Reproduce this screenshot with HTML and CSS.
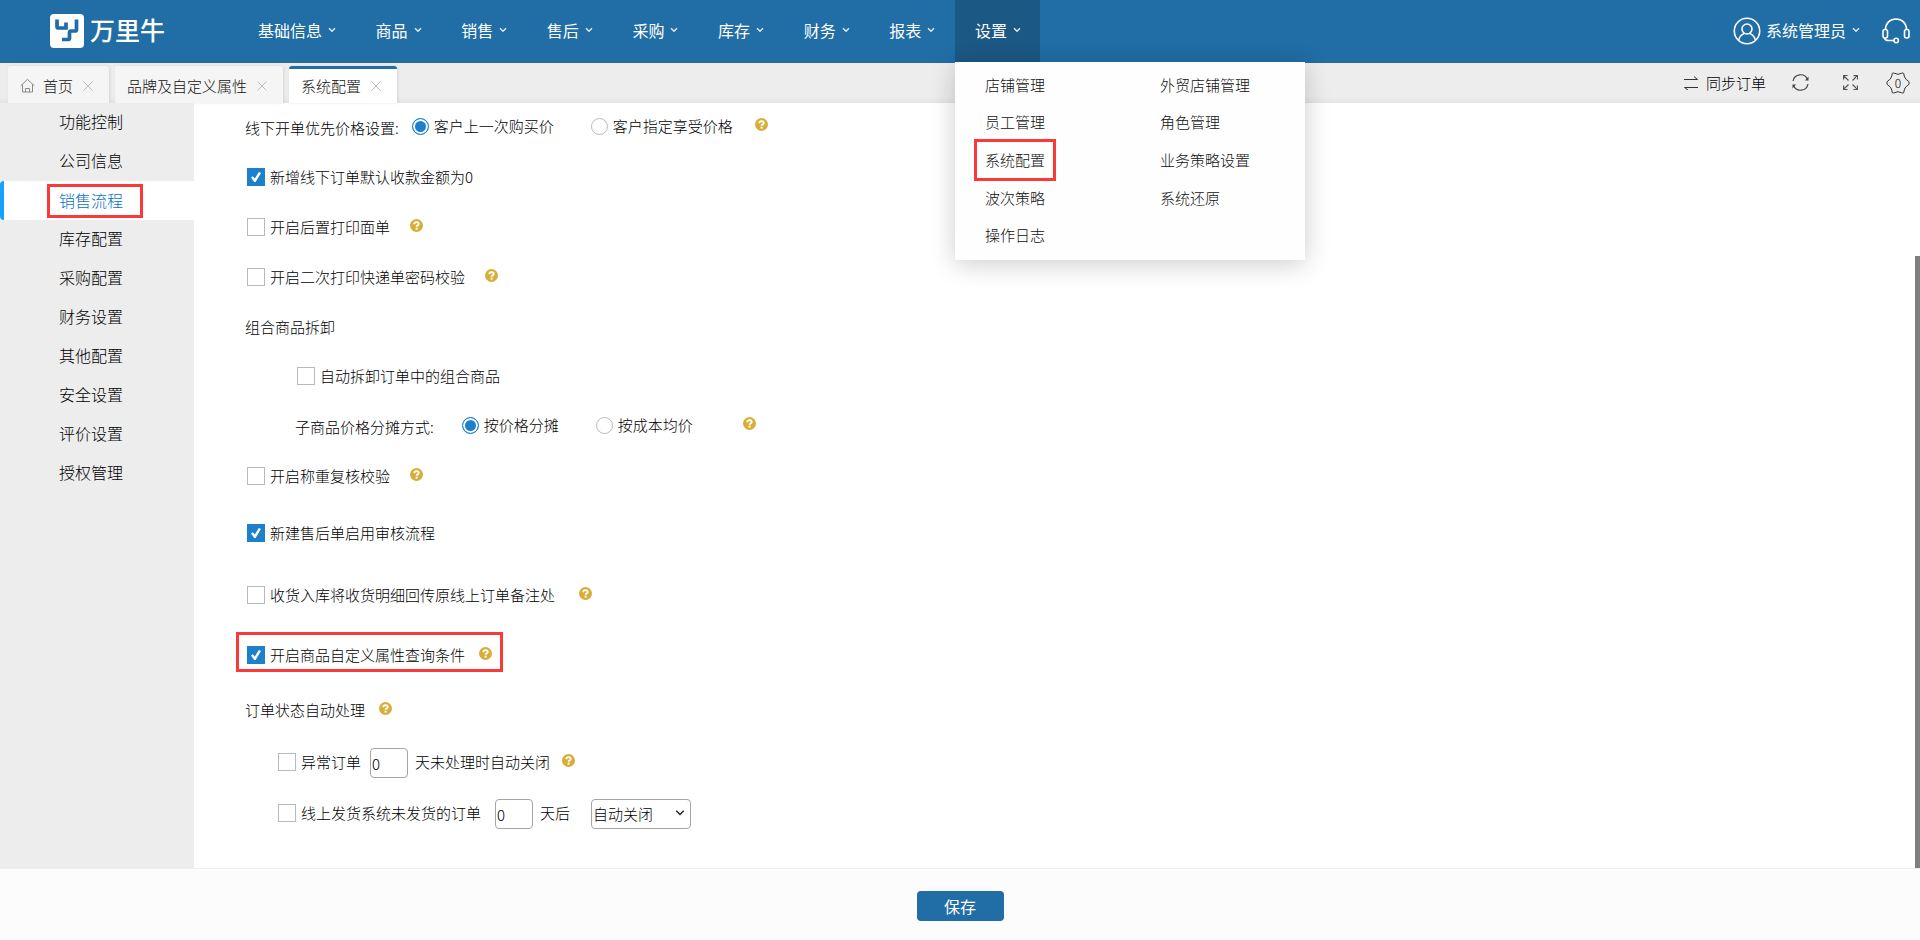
FILE: index.html
```html
<!DOCTYPE html>
<html lang="zh-CN">
<head>
<meta charset="utf-8">
<title>万里牛 - 系统配置</title>
<link rel="stylesheet" href="styles.css">
</head>
<body>
<svg class="defs" aria-hidden="true">
  <symbol id="chev" viewBox="0 0 8 6"><path d="M1 1.200 4 4.200 7 1.200" fill="none" stroke="currentColor" stroke-width="1.500"/></symbol>
  <symbol id="close" viewBox="0 0 10 10"><path d="M.5.5l9 9M9.500.5l-9 9" fill="none" stroke="currentColor"/></symbol>
  <symbol id="help" viewBox="0 0 13 13"><circle cx="6.500" cy="6.500" r="6.500" fill="#d8ae38"/><path d="M4.300 5.300c0-2.900 4.400-2.800 4.400-.3 0 1.400-2.100 1.300-2.100 2.800" fill="none" stroke="#fff" stroke-width="1.900"/><path d="M5.600 8.700h2v1.900h-2z" fill="#fff"/></symbol>
</svg>

<header class="header">
  <a class="brand" href="#">
    <svg class="brand-mark" viewBox="0 0 34 34" aria-hidden="true"><rect width="34" height="34" rx="4" fill="#fff"/><path d="M7 5.500v7q0 1.500 1.500 1.500H16V8.500M26.500 5.500v10q0 1.500-1.500 1.500h-4q-1.500 0-1.500 1.500v5.500q0 1.500-1.500 1.500H12" fill="none" stroke="#216da5" stroke-width="3.700"/></svg>
    <span>万里牛</span>
  </a>
  <nav class="nav">
    <a href="#">基础信息<svg class="chev"><use href="#chev"/></svg></a>
    <a href="#">商品<svg class="chev"><use href="#chev"/></svg></a>
    <a href="#">销售<svg class="chev"><use href="#chev"/></svg></a>
    <a href="#">售后<svg class="chev"><use href="#chev"/></svg></a>
    <a href="#">采购<svg class="chev"><use href="#chev"/></svg></a>
    <a href="#">库存<svg class="chev"><use href="#chev"/></svg></a>
    <a href="#">财务<svg class="chev"><use href="#chev"/></svg></a>
    <a href="#">报表<svg class="chev"><use href="#chev"/></svg></a>
    <div class="nav-open">
      <a class="active" href="#">设置<svg class="chev"><use href="#chev"/></svg></a>
      <div class="menu">
        <a href="#">店铺管理</a><a href="#">外贸店铺管理</a>
        <a href="#">员工管理</a><a href="#">角色管理</a>
        <a class="marked" href="#">系统配置</a><a href="#">业务策略设置</a>
        <a href="#">波次策略</a><a href="#">系统还原</a>
        <a href="#">操作日志</a>
      </div>
    </div>
  </nav>
  <div class="user">
    <svg class="avatar" viewBox="0 0 28 28" fill="none" stroke="#fff" stroke-width="1.600" aria-hidden="true"><circle cx="14" cy="14" r="12.700"/><circle cx="14" cy="12" r="5"/><path d="M5.500 23.200q1.500-5 5.500-6.700M22.500 23.200q-1.500-5-5.500-6.700"/></svg>
    <button class="user-name" type="button">系统管理员<svg class="chev"><use href="#chev"/></svg></button>
    <button class="icon-btn" type="button" aria-label="客服"><svg class="headset" viewBox="0 0 28 26" fill="none" stroke="#fff" stroke-width="1.600"><path d="M3.500 11.500C3.500 5 8 1 14 1s10.500 4 10.500 10.500"/><rect x="1" y="11.500" width="4.500" height="8.500" rx="2"/><rect x="22.500" y="11.500" width="4.500" height="8.500" rx="2"/><path d="M2.500 20q.5 2.500 4 2.500h5.500"/><circle cx="14.200" cy="22.500" r="2.200"/></svg></button>
  </div>
</header>

<div class="tabbar">
  <div class="tabs">
    <a class="tab" href="#"><svg class="home" viewBox="0 0 15 15" fill="none" stroke="#888"><path d="M.7 7.800 7.500 1.300l6.800 6.500M2.500 6.500v7.500h10V6.500M5.500 14v-3.500h4V14"/></svg>首页<svg class="close"><use href="#close"/></svg></a>
    <a class="tab" href="#">品牌及自定义属性<svg class="close"><use href="#close"/></svg></a>
    <a class="tab current" href="#">系统配置<svg class="close"><use href="#close"/></svg></a>
  </div>
  <div class="tools">
    <button class="sync" type="button"><svg viewBox="0 0 14 14" class="i14" fill="none" stroke="#333"><path d="M0 3.500h13.500L10 .5M14 11.500H.5L4 14"/></svg>同步订单</button>
    <button class="icon-btn" type="button" aria-label="刷新"><svg class="i17" viewBox="0 0 17 17" fill="none" stroke="#444" stroke-width="1.200"><path d="M1 7A7.600 7.600 0 0 1 15.500 5.500M16 10A7.600 7.600 0 0 1 1.500 11.500"/><path d="M16.500 2.500v4h-3.500zM.5 14.500v-4H4z" fill="#444" stroke="none"/></svg></button>
    <button class="icon-btn" type="button" aria-label="全屏"><svg class="i15" viewBox="0 0 15 15" fill="none" stroke="#555" stroke-width="1.200"><path d="M.6 4.500v-4h4M.6.6l4.900 4.900M10.500.6h4v4M14.400.6 9.500 5.500M.6 10.500v4h4M.6 14.400l4.900-4.900M14.400 10.500v4h-4M14.400 14.400 9.500 9.500"/></svg></button>
    <button class="count" type="button" aria-label="任务 0"><svg viewBox="0 0 24 22" fill="none" stroke="#333"><path d="M6.200 1.500q.8-1 2-.3 3.800 2.200 7.600 0 1.200-.7 2 .3.300 5.200 4.700 7.700 1.500 1.800 0 3.600-4.400 2.500-4.700 7.700-.8 1-2 .3-3.800-2.200-7.600 0-1.200.7-2-.3-.3-5.200-4.700-7.700-1.500-1.800 0-3.600 4.400-2.500 4.700-7.700z"/></svg><span>0</span></button>
  </div>
</div>

<div class="body">
  <aside class="side">
    <a href="#">功能控制</a>
    <a href="#">公司信息</a>
    <a class="on" href="#"><span>销售流程</span></a>
    <a href="#">库存配置</a>
    <a href="#">采购配置</a>
    <a href="#">财务设置</a>
    <a href="#">其他配置</a>
    <a href="#">安全设置</a>
    <a href="#">评价设置</a>
    <a href="#">授权管理</a>
  </aside>
  <main class="main">
    <form class="form" id="config">
      <div class="row first">
        <span class="legend">线下开单优先价格设置:</span>
        <label class="opt"><input type="radio" name="price" checked>客户上一次购买价</label>
        <label class="opt far"><input type="radio" name="price">客户指定享受价格</label>
        <svg class="help g22"><use href="#help"/></svg>
      </div>
      <div class="row"><label class="opt"><input type="checkbox" checked>新增线下订单默认收款金额为0</label></div>
      <div class="row"><label class="opt"><input type="checkbox">开启后置打印面单</label><svg class="help g20"><use href="#help"/></svg></div>
      <div class="row"><label class="opt"><input type="checkbox">开启二次打印快递单密码校验</label><svg class="help g20"><use href="#help"/></svg></div>
      <div class="row">组合商品拆卸</div>
      <div class="row sub2 h48"><label class="opt"><input type="checkbox">自动拆卸订单中的组合商品</label></div>
      <div class="row sub2 split">
        <span class="legend">子商品价格分摊方式:</span>
        <label class="opt"><input type="radio" name="share" checked>按价格分摊</label>
        <label class="opt far"><input type="radio" name="share">按成本均价</label>
        <svg class="help g50"><use href="#help"/></svg>
      </div>
      <div class="row h52"><label class="opt"><input type="checkbox">开启称重复核校验</label><svg class="help g20"><use href="#help"/></svg></div>
      <div class="row h62"><label class="opt"><input type="checkbox" checked>新建售后单启用审核流程</label></div>
      <div class="row h62"><label class="opt"><input type="checkbox">收货入库将收货明细回传原线上订单备注处</label><svg class="help g24"><use href="#help"/></svg></div>
      <div class="row h52"><div class="framed"><label class="opt"><input type="checkbox" checked>开启商品自定义属性查询条件</label><svg class="help g14"><use href="#help"/></svg></div></div>
      <div class="row h64">订单状态自动处理<svg class="help g14"><use href="#help"/></svg></div>
      <div class="row sub1 h40">
        <label class="opt"><input type="checkbox">异常订单</label>
        <input class="num" type="text" value="0" aria-label="未处理天数">
        <span>天未处理时自动关闭</span><svg class="help g12"><use href="#help"/></svg>
      </div>
      <div class="row sub1 late h62">
        <label class="opt"><input type="checkbox">线上发货系统未发货的订单</label>
        <input class="num" type="text" value="0" aria-label="未发货天数">
        <span>天后</span>
        <span class="pick"><select aria-label="处理方式"><option>自动关闭</option></select><svg class="pick-chev" viewBox="0 0 10 8"><path d="M1.300 1.800 5 5.500 8.700 1.800" fill="none" stroke="#222" stroke-width="1.500"/></svg></span>
      </div>
    </form>
    <div class="rail"><div class="thumb"></div></div>
  </main>
</div>

<footer class="footer"><button class="save" type="submit" form="config">保存</button></footer>
</body>
</html>
```
FILE: styles.css
```css
* { box-sizing: border-box; }

body {
  margin: 0;
  min-height: 100vh;
  display: flex;
  flex-direction: column;
  font: 300 15px/20px "Noto Sans CJK SC", sans-serif;
  color: #000;
  background: #fff;
}

a { color: inherit; text-decoration: none; }
svg { display: block; flex: none; }
button, input, select { font: inherit; color: inherit; margin: 0; }
button { border: 0; padding: 0; background: none; }
.defs { position: absolute; width: 0; height: 0; }

/* header */
.header {
  height: 63px;
  padding-bottom: 1px;
  display: flex;
  align-items: center;
  background: #216da5;
  color: #fff;
  font-size: 16px;
  font-weight: 400;
}
.brand {
  display: flex;
  align-items: center;
  gap: 6px;
  width: 238px;
  padding-left: 50px;
  font-size: 25px;
  line-height: 30px;
  font-weight: 500;
}
.brand span { padding-bottom: 4px; }
.brand-mark { width: 34px; height: 34px; }
.nav {
  display: flex;
  justify-content: space-between;
  width: 802px;
  height: 100%;
}
.nav > a, .nav-open > a {
  display: flex;
  align-items: center;
  gap: 6px;
  height: 100%;
  padding: 0 19px 2px 20px;
}
.chev { width: 8px; height: 6px; opacity: .85; }
.nav-open { position: relative; z-index: 5; }
.nav-open > .active { background: #1b5884; }
.menu {
  position: absolute;
  top: 62px;
  left: 0;
  width: 350px;
  min-height: 198px;
  padding: 4px 0 6px;
  display: grid;
  grid-template-columns: 1fr 1fr;
  grid-auto-rows: 1fr;
  background: #fefefe;
  color: #111;
  font-size: 15px;
  font-weight: 300;
  box-shadow: 0 4px 24px rgba(0, 0, 0, .2);
}
.menu a { display: flex; align-items: center; padding-left: 30px; }
.menu .marked {
  margin: -2px 0 -2px 19px;
  padding-left: 8px;
  width: 82px;
  border: 3px solid #fb3939;
}
.user { display: flex; align-items: center; margin-left: auto; padding-right: 10px; }
.avatar { width: 28px; height: 28px; }
.user-name { display: flex; align-items: center; gap: 6px; margin: 0 22px 0 5px; padding-bottom: 2px; }
.headset { width: 28px; height: 26px; }

/* tabs */
.tabbar {
  height: 40px;
  display: flex;
  justify-content: space-between;
  background: linear-gradient(#ededed 85%, #e4e4e4);
}
.tabs { display: flex; align-items: flex-end; gap: 6px; padding-left: 8px; }
.tab {
  display: flex;
  align-items: center;
  gap: 10px;
  height: 37px;
  padding: 2px 16px 0 12px;
  border-radius: 3px 3px 0 0;
  background: #f5f5f5;
  color: #111;
  box-shadow: 1px 0 3px rgba(0, 0, 0, .1);
}
.tab.current { border-top: 3px solid #216da5; padding-top: 0; padding-bottom: 1px; background: #fff; }
.home { width: 15px; height: 15px; margin-right: -2px; }
.close { width: 10px; height: 10px; color: #bbb; }
.tools { display: flex; align-items: center; padding: 0 10px 1px 0; }
.sync { display: flex; align-items: center; gap: 8px; margin-right: 26px; }
.i14 { width: 14px; height: 14px; }
.i17 { width: 17px; height: 17px; margin-right: 34px; }
.i15 { width: 15px; height: 15px; margin-right: 28px; }
.count { position: relative; width: 24px; height: 22px; }
.count span {
  position: absolute;
  inset: 0;
  font-size: 12px;
  line-height: 22px;
  text-align: center;
}

/* body */
.body { flex: 1; display: flex; }
.side {
  width: 194px;
  background: #ededed;
  font-size: 16px;
}
.side a { display: flex; align-items: center; height: 39px; padding: 0 0 3px 59px; }
.side .on {
  padding: 0 0 0 43px;
  background: #fff;
  border-left: 4px solid #18a0fb;
  border-radius: 4px 0 0 4px;
  color: #0a72c4;
}
.side .on span { padding: 3px 17px 5px 9px; border: 3px solid #fb3939; }
.main { flex: 1; display: flex; }
.form { flex: 1; padding-left: 51px; }
.row { display: flex; align-items: center; height: 50px; }
.first { height: 49px; padding-bottom: 3px; }
.h40 { height: 40px; }
.h48 { height: 48px; }
.h52 { height: 52px; }
.h62 { height: 62px; }
.h64 { height: 64px; }
.sub1 { padding-left: 31px; }
.sub2 { padding-left: 50px; }
.opt { display: flex; align-items: center; gap: 5px; }
.row > .opt:first-child { padding-left: 2px; }
.legend { padding-top: 3px; margin-right: 13px; }
.split .legend { margin-right: 28px; }
.far { margin-left: 37px; }
.help { width: 13px; height: 13px; margin-bottom: 3px; }
.g12 { margin-left: 12px; }
.g14 { margin-left: 14px; }
.g20 { margin-left: 20px; }
.g22 { margin-left: 22px; }
.g24 { margin-left: 24px; }
.g50 { margin-left: 50px; }

input[type="checkbox"], input[type="radio"] {
  appearance: none;
  flex: none;
  display: grid;
  place-content: center;
  width: 18px;
  height: 18px;
  border: 1px solid #b9b9b9;
  background: #fff;
}
input[type="radio"] { width: 17px; height: 17px; border-radius: 50%; }
input[type="radio"]:checked {
  border-color: #1c80cd;
  background: #1c80cd;
  box-shadow: inset 0 0 0 2px #fff;
}
input[type="checkbox"]:checked { background: #1c80cd; border-color: #1c80cd; }
input[type="checkbox"]:checked::after {
  content: "";
  width: 10px;
  height: 10px;
  background: #fff;
  clip-path: polygon(0 55%, 18% 42%, 38% 64%, 78% 0, 100% 10%, 46% 100%, 32% 100%);
}
.framed {
  display: flex;
  align-items: center;
  height: 40px;
  margin-left: -9px;
  padding: 6px 8px 0 8px;
  border: 3px solid #fb3939;
}
.num, .pick select {
  height: 30px;
  border: 1px solid #a5a5a5;
  border-radius: 4px;
  background: #fff;
}
.num { width: 38px; margin: 2px 7px 0 9px; padding: 0 1px; }
.late .num { margin-left: 14px; }
.pick { position: relative; margin: 2px 0 0 21px; }
.pick select { display: block; width: 100px; padding: 0 1px; appearance: none; }
.pick-chev { position: absolute; right: 6px; top: 10px; width: 10px; height: 8px; pointer-events: none; }
.rail { width: 5px; display: flex; align-items: flex-end; }
.thumb { width: 5px; height: 80%; background: #808080; }

/* footer */
.footer {
  height: 72px;
  padding-top: 3px;
  display: flex;
  align-items: center;
  justify-content: center;
  border-top: 1px solid #f0f0f0;
  background: #fcfcfc;
}
.save {
  width: 87px;
  height: 30px;
  padding-bottom: 1px;
  border-radius: 4px;
  background: #216da5;
  color: #fff;
  font-size: 16px;
  font-weight: 400;
}
```
